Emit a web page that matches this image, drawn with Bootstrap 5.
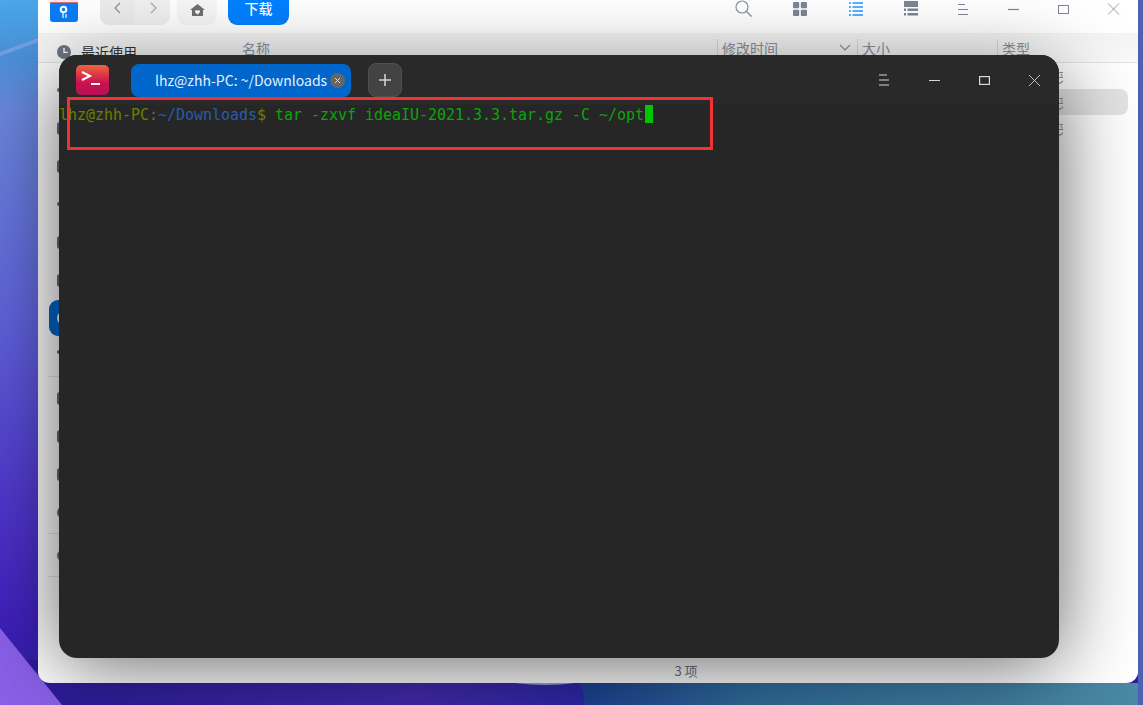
<!DOCTYPE html>
<html lang="zh-CN">
<head>
<meta charset="utf-8">
<title>Terminal</title>
<link href="https://cdn.jsdelivr.net/npm/bootstrap@5.3.0/dist/css/bootstrap.min.css" rel="stylesheet">
<style>
html,body{height:100%;margin:0;overflow:hidden;font-family:"Noto Sans CJK SC","Noto Sans",sans-serif;background:#2c1a98}
.desk{position:relative;width:1143px;height:705px;overflow:hidden}
.wall{position:absolute;inset:0;width:1143px;height:705px}
.fm{position:absolute;left:38px;top:-10px;width:1100px;height:693px;background:#fff;border-radius:0 0 12px 12px;overflow:hidden}
.fm-tool{height:43px;background:#fff;padding-left:12px}
.fm-logo{width:28px;height:32px;border-radius:0 0 3px 3px;margin-right:22px}
.nav-pair{width:70px;height:35px;background:#f0f0f0;border-radius:0 0 9px 9px;margin-right:7px}
.nav-pair>div{width:35px}
.nav-pair>div:first-child{background:#ececec;border-radius:0 0 0 9px}
.home-btn{width:40px;height:35px;background:#f6f6f6;border-radius:0 0 9px 9px;margin-right:11px;padding-top:14px}
.dl-btn{width:61px;height:35px;background:#0081ff;color:#fff;border-radius:0 0 9px 9px;font-size:14px;font-weight:500;padding-top:10px;line-height:16px}
.tool-ic{width:50px;height:35px;padding-top:12px}
.tool-ic.srch{width:56px;padding-top:10px}
.tool-ic.w56{width:56px}
.tool-ic.w54{width:54px;padding-top:11px}
.tool-right{margin-left:auto}
.fm-head{height:30px;background:linear-gradient(#f4f4f4,#fafafa);border-bottom:1px solid #e4e4e4;font-size:14px;color:#8a92a0;line-height:18px;padding-top:6px}
.hc{height:24px;padding-left:4px;border-left:1px solid #dcdcdc}
.hc-name{margin-left:199px;width:480px;border-left:0;padding-left:5px}
.hc-time{width:140px;position:relative}
.hc-size{width:140px}
.hc-type{width:100px}
.fm-main{height:590px}
.side{width:204px;padding:0 0 0 11px;margin-top:-30px;position:relative}
.side-row{height:38px;padding-left:8px;border-radius:9px;color:#303030;font-size:14px;gap:10px}
.side-row.on{background:#0066cc;height:36px;margin:1px 0;color:#fff}
.side-row.short{height:30px}
.dot{width:14px;height:13px;background:#666c7c;border-radius:3px;flex:none}
.dot.tiny{height:4px}
.side-row.on .dot{background:#fff;border-radius:50%;height:14px}
.dot.round{border-radius:50%}
.clock{width:14px;height:14px;flex:none}
.rule{height:1px;background:#e6e6e6;margin:2px 0 2px -1px}
.rule.first{margin-top:9px}
.list{flex:1;padding-right:10px;min-width:0}
.frow{height:26px;border-radius:8px;font-size:14px;color:#8a92a0;line-height:26px}
.frow.sel{background:#e4e4e4}
.ftype{margin-left:760px;width:61px;overflow:hidden;white-space:nowrap}
.fm-foot{height:29px;font-size:13px;color:#6e7480;line-height:20px;text-align:center;background:#fff;padding:8px 0 0 196px}
.term{position:absolute;left:59px;top:55px;width:1000px;height:603px;background:#262626;border-radius:18px;overflow:hidden}
.term-shadow{position:absolute;left:59px;top:69px;width:1000px;height:589px;border-radius:18px;box-shadow:0 6px 80px rgba(0,0,0,.62)}
.term-bar{height:50px;background:#292929;padding-left:17px}
.term-logo{width:33px;height:30px;border-radius:5px;background:linear-gradient(#f0633f,#c9124f 60%,#b80f58);margin-right:22px;flex:none}
.term-tab{width:220px;height:33px;background:#0066cc;border-radius:8px;color:#e8f0fa;font-size:14px;padding-left:24px;margin-right:17px;position:relative;line-height:33px;white-space:nowrap;flex:none}
.tab-x{position:absolute;left:199px;top:9px;width:15px;height:15px;border-radius:50%;background:#666}
.term-add{width:34px;height:34px;background:#434343;border:1px solid #505050;border-radius:8px;flex:none}
.win-ic{width:50px;height:50px;flex:none}
.term-ctrls{margin-left:auto}
.term-body{font-family:"DejaVu Sans Mono",monospace;font-size:15px;letter-spacing:-.03px;line-height:20px;color:#0ba50b;white-space:pre;height:553px}
.c-host{color:#6d7f00}.c-path{color:#2a5ca6}.c-colon{color:#3f7a5c}
.cursor{display:inline-block;width:8px;height:18px;background:#00c800;vertical-align:top;margin-left:1px}
.redbox{position:absolute;left:67px;top:97px;width:646px;height:53px;border:3px solid #f23232}
</style>
</head>
<body>
<div class="desk">
  <svg class="wall" viewBox="0 0 1143 705" preserveAspectRatio="none" aria-hidden="true">
    <defs>
      <linearGradient id="lg1" x1="0" y1="0" x2="0" y2="1">
        <stop offset="0" stop-color="#49a7ea"/><stop offset=".08" stop-color="#4a90d8"/><stop offset=".16" stop-color="#6a86dc"/><stop offset=".45" stop-color="#5f62da"/><stop offset=".7" stop-color="#5038cc"/><stop offset=".88" stop-color="#3f20bc"/><stop offset="1" stop-color="#2c1a98"/>
      </linearGradient>
      <linearGradient id="lg2" x1="0" y1="0" x2="1" y2="0">
        <stop offset="0" stop-color="#2a1a98"/><stop offset=".7" stop-color="#4029a8"/><stop offset="1" stop-color="#2a25a4"/>
      </linearGradient>
      <linearGradient id="lg3" x1="0" y1="0" x2="1" y2="0">
        <stop offset="0" stop-color="#1c3f90"/><stop offset=".3" stop-color="#2f6a98"/><stop offset="1" stop-color="#4a8aa6"/>
      </linearGradient>
    </defs>
    <rect width="1143" height="705" fill="url(#lg1)"/>
    <path d="M0 52 L38 38 L38 42 L0 56Z" fill="#8fa8ea" opacity=".6"/>
    <rect x="0" y="660" width="600" height="45" fill="url(#lg2)"/>
    <path d="M0 628 L62 705 L0 705Z" fill="#8a60e8"/>
    <path d="M515 683 Q547 687 575 683Z" fill="#8fa4d0"/>
    <path d="M579 683 Q586 695 583 705 L1143 705 L1143 683Z" fill="url(#lg3)"/>
    <rect x="1138" y="0" width="5" height="705" fill="#4d62b4"/>
  </svg>

  <div class="fm d-flex flex-column">
    <div class="fm-tool d-flex align-items-start">
      <div class="fm-logo">
        <svg width="28" height="32" viewBox="0 0 28 32"><rect width="28" height="32" rx="3" fill="#0a7cf5"/><rect y="8" width="28" height="4" fill="#fbe9e9"/><rect y="12" width="28" height="1" fill="#e06a7a"/><circle cx="13.5" cy="19.5" r="2.8" fill="none" stroke="#fff" stroke-width="2"/><path d="M13 23v5M16 24v4" stroke="#fff" stroke-width="1.2"/></svg>
      </div>
      <div class="nav-pair d-flex">
        <div class="d-flex align-items-center justify-content-center"><svg width="12" height="14" viewBox="0 0 12 14"><path d="M8 2 3 7l5 5" fill="none" stroke="#8c8c8c" stroke-width="1.2"/></svg></div>
        <div class="d-flex align-items-center justify-content-center"><svg width="12" height="14" viewBox="0 0 12 14"><path d="M4 2l5 5-5 5" fill="none" stroke="#a8a8a8" stroke-width="1.2"/></svg></div>
      </div>
      <div class="home-btn d-flex justify-content-center">
        <svg width="15" height="12" viewBox="0 0 15 12"><path d="M7.5 0 15 6H13v6H2V6H0Z" fill="#6f6f6f"/><path d="M7.5 10.5 5 8a1.4 1.4 0 0 1 2.5-1.2A1.4 1.4 0 0 1 10 8Z" fill="#fff"/></svg>
      </div>
      <div class="dl-btn text-center">下载</div>
      <div class="tool-right d-flex">
        <div class="tool-ic srch d-flex justify-content-center"><svg width="18" height="18" viewBox="0 0 18 18"><circle cx="7" cy="7" r="6" fill="none" stroke="#8a92a0" stroke-width="1.2"/><path d="M11.5 11.5l5 5" stroke="#8a92a0" stroke-width="1.4"/></svg></div>
        <div class="tool-ic w56 d-flex justify-content-center"><svg width="14" height="14" viewBox="0 0 14 14"><g fill="#7d8696"><rect width="6.2" height="6.2" rx="1"/><rect x="7.8" width="6.2" height="6.2" rx="1"/><rect y="7.8" width="6.2" height="6.2" rx="1"/><rect x="7.8" y="7.8" width="6.2" height="6.2" rx="1"/></g></svg></div>
        <div class="tool-ic w56 d-flex justify-content-center"><svg width="14" height="14" viewBox="0 0 14 14"><g fill="#5aaeff"><rect width="2" height="2"/><rect x="3.5" width="10.5" height="2"/><rect y="4" width="2" height="2"/><rect x="3.5" y="4" width="10.5" height="2"/><rect y="8" width="2" height="2"/><rect x="3.5" y="8" width="10.5" height="2"/><rect y="12" width="2" height="2"/><rect x="3.5" y="12" width="10.5" height="2"/></g></svg></div>
        <div class="tool-ic w54 d-flex justify-content-center"><svg width="14" height="15" viewBox="0 0 14 15"><g fill="#7d8696"><rect width="14" height="6"/><rect y="7.5" width="2" height="2.5"/><rect x="3.5" y="7.5" width="10.5" height="2.5"/><rect y="12" width="2" height="2.5"/><rect x="3.5" y="12" width="10.5" height="2.5"/></g></svg></div>
        <div class="tool-ic d-flex justify-content-center"><svg width="10" height="14" viewBox="0 0 10 14"><path d="M0 2.5h7M0 7.5h10M0 12.5h10" stroke="#7d8696" stroke-width="1"/></svg></div>
        <div class="tool-ic d-flex justify-content-center"><svg width="11" height="14" viewBox="0 0 11 14"><path d="M0 7.5h11" stroke="#7d8696" stroke-width="1.2"/></svg></div>
        <div class="tool-ic d-flex justify-content-center"><svg width="11" height="14" viewBox="0 0 11 14"><rect x=".5" y="3.5" width="10" height="8" fill="none" stroke="#7d8696" stroke-width="1"/></svg></div>
        <div class="tool-ic d-flex justify-content-center"><svg width="13" height="14" viewBox="0 0 13 14"><path d="M1 1.5l11 11M12 1.5 1 12.5" stroke="#7d8696" stroke-width=".8"/></svg></div>
      </div>
    </div>
    <div class="fm-head d-flex">
      <div class="hc hc-name">名称</div>
      <div class="hc hc-time">修改时间<svg class="position-absolute" style="left:121px;top:5px" width="12" height="8" viewBox="0 0 12 8"><path d="M1 1l5 5 5-5" fill="none" stroke="#8a92a0" stroke-width="1.2"/></svg></div>
      <div class="hc hc-size">大小</div>
      <div class="hc hc-type">类型</div>
    </div>
    <div class="fm-main d-flex">
      <div class="side">
        <div class="side-row d-flex align-items-center"><svg class="clock" viewBox="0 0 14 14"><circle cx="7" cy="7" r="7" fill="#6f7585"/><path d="M7 3v4.4h3.6" fill="none" stroke="#fff" stroke-width="1.3"/></svg><span>最近使用</span></div>
        <div class="side-row d-flex align-items-center"><span class="dot tiny"></span><span>主目录</span></div>
        <div class="side-row d-flex align-items-center"><span class="dot"></span><span>桌面</span></div>
        <div class="side-row d-flex align-items-center"><span class="dot"></span><span>视频</span></div>
        <div class="side-row d-flex align-items-center"><span class="dot tiny"></span><span>音乐</span></div>
        <div class="side-row d-flex align-items-center"><span class="dot"></span><span>图片</span></div>
        <div class="side-row d-flex align-items-center"><span class="dot"></span><span>文档</span></div>
        <div class="side-row on d-flex align-items-center"><span class="dot"></span><span>下载</span></div>
        <div class="side-row short d-flex align-items-center"><span class="dot tiny"></span><span>回收站</span></div>
        <div class="rule first"></div>
        <div class="side-row d-flex align-items-center"><span class="dot"></span><span>计算机</span></div>
        <div class="side-row d-flex align-items-center"><span class="dot"></span><span>系统盘</span></div>
        <div class="side-row d-flex align-items-center"><span class="dot"></span><span>数据盘</span></div>
        <div class="side-row d-flex align-items-center"><span class="dot round"></span><span>光盘</span></div>
        <div class="rule"></div>
        <div class="side-row d-flex align-items-center"><span class="dot round"></span><span>网络邻居</span></div>
        <div class="rule"></div>
      </div>
      <div class="list">
        <div class="frow"><div class="ftype">压缩文件夹</div></div>
        <div class="frow sel"><div class="ftype">压缩文件夹</div></div>
        <div class="frow"><div class="ftype">压缩文件夹</div></div>
      </div>
    </div>
    <div class="fm-foot">3 项</div>
  </div>

  <div class="term-shadow"></div>
  <div class="term d-flex flex-column">
    <div class="term-bar d-flex align-items-center">
      <div class="term-logo d-flex">
        <svg width="33" height="30" viewBox="0 0 33 30"><path d="M6 7l8 4-8 4" fill="none" stroke="#fff" stroke-width="2"/><path d="M15 19h9" stroke="#fff" stroke-width="2"/></svg>
      </div>
      <div class="term-tab">lhz@zhh-PC: ~/Downloads<span class="tab-x d-flex align-items-center justify-content-center"><svg width="7" height="7" viewBox="0 0 7 7"><path d="M1 1l5 5M6 1 1 6" stroke="#ddd" stroke-width="1"/></svg></span></div>
      <div class="term-add d-flex align-items-center justify-content-center"><svg width="14" height="14" viewBox="0 0 14 14"><path d="M7 1v12M1 7h12" stroke="#cfcfcf" stroke-width="1.6"/></svg></div>
      <div class="term-ctrls d-flex">
        <div class="win-ic d-flex align-items-center justify-content-center"><svg width="10" height="12" viewBox="0 0 10 12"><path d="M0 1h8M0 6h10M0 11h10" stroke="#d4d8e0" stroke-width="1"/></svg></div>
        <div class="win-ic d-flex align-items-center justify-content-center"><svg width="11" height="12" viewBox="0 0 11 12"><path d="M0 6.5h11" stroke="#d4d8e0" stroke-width="1.2"/></svg></div>
        <div class="win-ic d-flex align-items-center justify-content-center"><svg width="11" height="12" viewBox="0 0 11 12"><rect x=".6" y="2.6" width="9.8" height="7.8" fill="none" stroke="#d4d8e0" stroke-width="1.2"/></svg></div>
        <div class="win-ic d-flex align-items-center justify-content-center"><svg width="13" height="13" viewBox="0 0 13 13"><path d="M1 1l11 11M12 1 1 12" stroke="#e4e6ea" stroke-width=".8"/></svg></div>
      </div>
    </div>
    <div class="term-body"><span class="c-host">lhz@zhh-PC</span><span class="c-colon">:</span><span class="c-path">~/Downloads</span><span class="c-host">$</span> tar -zxvf ideaIU-2021.3.3.tar.gz -C ~/opt<span class="cursor"></span></div>
  </div>
  <div class="redbox"></div>
</div>
<script src="https://cdn.jsdelivr.net/npm/bootstrap@5.3.0/dist/js/bootstrap.bundle.min.js"></script>
</body>
</html>
